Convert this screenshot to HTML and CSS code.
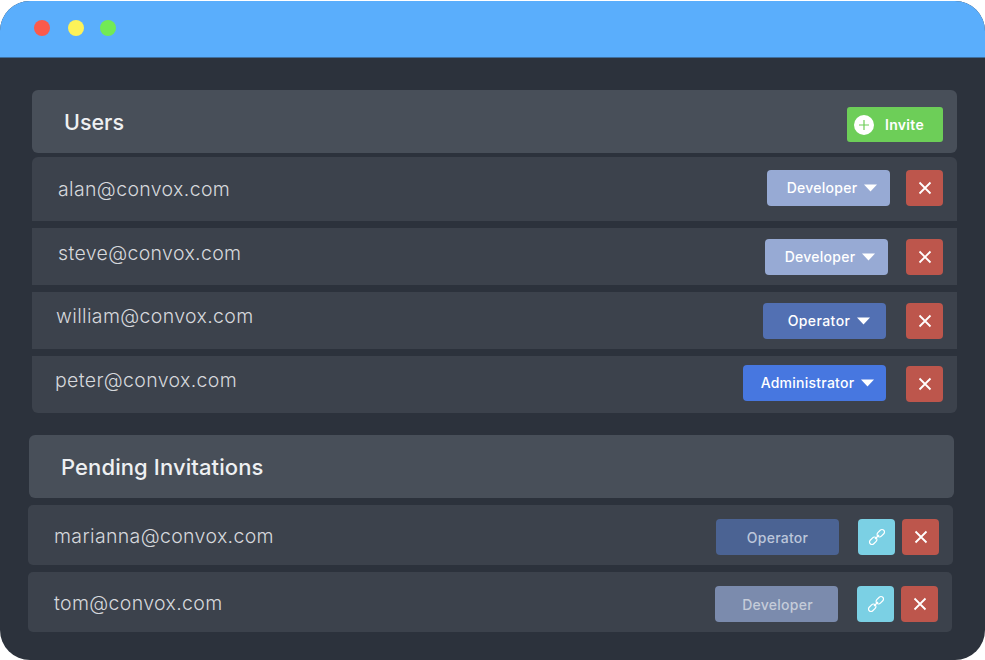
FILE: index.html
```html
<!DOCTYPE html>
<html lang="en">
<head>
<meta charset="utf-8">
<title>Users</title>
<link rel="stylesheet" href="styles.css">
</head>
<body>
<svg class="defs" width="0" height="0" aria-hidden="true">
  <symbol id="x" viewBox="0 0 14 14"><path d="M1.5 1.5l11 11M12.500 1.500l-11 11" fill="none" stroke="currentColor" stroke-width="1.800"/></symbol>
  <symbol id="link" viewBox="0 0 18 18"><g fill="none" stroke="currentColor" stroke-width="1.200"><rect x="-4.200" y="-2.500" width="8.400" height="5" rx="2.500" transform="translate(5.200 12.800) rotate(-45)"/><rect x="-4.200" y="-2.500" width="8.400" height="5" rx="2.500" transform="translate(12.800 5.200) rotate(-45)"/><path d="M7 11l4-4"/></g></symbol>
  <symbol id="caret" viewBox="0 0 13 8"><path d="M0 .5h13L6.500 7.500z" fill="currentColor"/></symbol>
</svg>
<main class="window">
  <header class="titlebar">
    <span class="dot dot-red"></span>
    <span class="dot dot-yellow"></span>
    <span class="dot dot-green"></span>
  </header>
  <div class="content">
    <section class="group group-users">
      <div class="head head-users">
        <h2 class="title title-users">Users</h2>
        <button class="invite"><span class="plus"><svg width="12" height="12" viewBox="0 0 12 12"><path d="M6 1v10M1 6h10" fill="none" stroke="#6dce58" stroke-width="1.200"/></svg></span>Invite</button>
      </div>
      <div class="row row-alan">
        <span class="email">alan@convox.com</span>
        <button class="role picker dev">Developer<svg class="caret"><use href="#caret"/></svg></button>
        <button class="square del"><svg class="ico-x"><use href="#x"/></svg></button>
      </div>
      <div class="row row-steve">
        <span class="email">steve@convox.com</span>
        <button class="role picker dev">Developer<svg class="caret"><use href="#caret"/></svg></button>
        <button class="square del"><svg class="ico-x"><use href="#x"/></svg></button>
      </div>
      <div class="row row-william">
        <span class="email">william@convox.com</span>
        <button class="role picker op">Operator<svg class="caret"><use href="#caret"/></svg></button>
        <button class="square del"><svg class="ico-x"><use href="#x"/></svg></button>
      </div>
      <div class="row row-peter">
        <span class="email">peter@convox.com</span>
        <button class="role picker admin">Administrator<svg class="caret"><use href="#caret"/></svg></button>
        <button class="square del"><svg class="ico-x"><use href="#x"/></svg></button>
      </div>
    </section>
    <section class="group group-pending">
      <div class="head head-pending">
        <h2 class="title title-pending">Pending Invitations</h2>
      </div>
      <div class="row row-marianna">
        <span class="email">marianna@convox.com</span>
        <span class="role pending-op">Operator</span>
        <button class="square copy"><svg class="ico-link"><use href="#link"/></svg></button>
        <button class="square del"><svg class="ico-x"><use href="#x"/></svg></button>
      </div>
      <div class="row row-tom">
        <span class="email">tom@convox.com</span>
        <span class="role pending-dev">Developer</span>
        <button class="square copy"><svg class="ico-link"><use href="#link"/></svg></button>
        <button class="square del"><svg class="ico-x"><use href="#x"/></svg></button>
      </div>
    </section>
  </div>
</main>
</body>
</html>
```

FILE: styles.css
```css
* { box-sizing: border-box; }
html, body { margin: 0; padding: 0; background: #fff; }
body { width: 985px; height: 660px; overflow: hidden; font-family: Inter, "Liberation Sans", sans-serif; }
.defs { display: block; height: 0; }
button { font: inherit; border: 0; padding: 0; margin: 0; }

.window { width: 985px; height: 659px; margin-top: 1px; background: #2c323c; border-radius: 30px; overflow: hidden; display: flex; flex-direction: column; }
.titlebar { height: 57px; flex: none; background: #5aaefc; display: flex; align-items: flex-start; padding: 19px 0 0 34px; border-bottom: 1px solid #3f6f9e; }
.dot { width: 16px; height: 16px; border-radius: 50%; }
.dot-red { background: #fb5a4b; }
.dot-yellow { background: #fdf258; margin-left: 18px; }
.dot-green { background: #72ea55; margin-left: 16px; }

.content { padding-top: 32px; }
.group { display: flex; flex-direction: column; }
.group-users { margin-left: 32px; width: 925px; }
.group-pending { margin-left: 28px; width: 926px; margin-top: 22px; }

.head { height: 63px; flex: none; background: #484f59; border-radius: 6px; display: flex; }
.head-users { padding: 17px 14px 0 32px; justify-content: space-between; align-items: flex-start; }
.head-pending { margin-left: 1px; padding: 19px 0 0 32px; }
.title { margin: 0; color: #eef0f2; font-size: 21.500px; line-height: 26px; font-weight: 500; }
.title-users { margin-top: 2px; }
.title-pending { font-size: 22px; letter-spacing: .1px; }

.invite { width: 96px; height: 35px; background: #6dce58; color: #fff; border-radius: 3px; font-size: 14px; font-weight: 600; letter-spacing: .3px; display: flex; align-items: center; padding-left: 7px; gap: 11px; }
.plus { width: 20px; height: 20px; border-radius: 50%; background: #fff; display: flex; align-items: center; justify-content: center; }

.row { background: #3c424c; display: flex; align-items: flex-start; }
.email { color: #d6d8dc; font-size: 19.500px; line-height: 24px; font-weight: 300; letter-spacing: .35px; margin-right: auto; }

.role { width: 123px; height: 36px; border-radius: 4px; font-size: 14px; font-weight: 500; letter-spacing: .25px; display: flex; align-items: center; justify-content: center; gap: 7px; }
.picker { padding: 0 0 1px 7px; }
.caret { width: 13px; height: 8px; }
.dev { background: #97aad4; color: #fff; }
.op { background: #5270b3; color: #fff; padding-left: 9px; letter-spacing: .4px; }
.admin { width: 143px; background: #4777e0; color: #fff; padding-left: 6px; }
.pending-op { background: #4b6393; color: #bcc6da; }
.pending-dev { background: #7b8bad; color: #c5ccd9; padding-left: 2px; }

.square { width: 37px; height: 36px; border-radius: 4px; display: flex; align-items: center; justify-content: center; color: #fff; }
.del { background: #bd564c; }
.copy { background: #7bd0e4; }
.ico-x { width: 14px; height: 14px; }
.ico-link { width: 18px; height: 18px; }

.row-alan { height: 64px; margin-top: 4px; padding: 13px 14px 0 26px; border-radius: 6px 6px 0 0; }
.row-alan .email { margin-top: 7px; }
.row-alan .role { margin-right: 16px; }
.row-steve { height: 57px; margin-top: 7px; padding: 11px 14px 0 26px; }
.row-steve .email { margin-top: 2px; }
.row-steve .role { margin-right: 18px; }
.row-william { height: 57px; margin-top: 7px; padding: 11px 14px 0 24px; }
.row-william .email { margin-top: 1px; }
.row-william .role { margin-right: 20px; }
.row-peter { height: 57px; margin-top: 7px; padding: 9px 14px 0 23px; border-radius: 0 0 6px 6px; }
.row-peter .email { margin-top: 3px; }
.row-peter .role { margin-right: 20px; }
.row-peter .del { margin-top: 1px; }

.row-marianna { height: 60px; margin-top: 7px; width: 925px; padding: 14px 14px 0 26px; border-radius: 5px; }
.row-marianna .email { margin-top: 5px; }
.row-marianna .role { margin-right: 19px; }
.row-marianna .copy { margin-right: 7px; }
.row-tom { height: 60px; margin-top: 7px; width: 924px; padding: 14px 14px 0 26px; border-radius: 5px; }
.row-tom .email { margin-top: 5px; }
.row-tom .role { margin-right: 19px; }
.row-tom .copy { margin-right: 7px; }
```
